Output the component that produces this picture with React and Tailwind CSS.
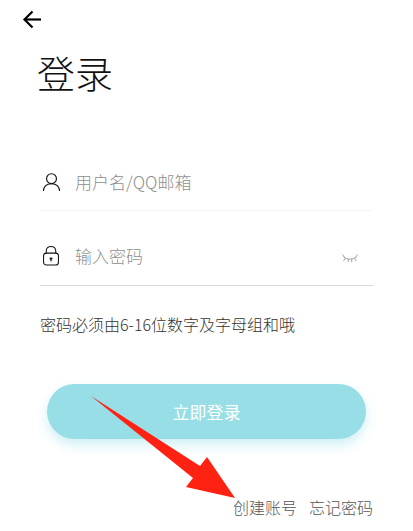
const cjk = 'font-["Noto_Sans_CJK_SC","Noto_Sans",sans-serif]';

function BackArrow() {
  return (
    <svg width="20" height="20" viewBox="0 0 20 20" fill="none" stroke="#000" strokeWidth="2.2">
      <path d="M19 9.5H3" />
      <path d="M10.5 1.5L2.5 9.5L10.5 17.5" />
    </svg>
  );
}

function UserIcon() {
  return (
    <svg width="19" height="20" viewBox="0 0 20 20" fill="none" stroke="#111" strokeWidth="1.2">
      <circle cx="10" cy="6.5" r="5.2" />
      <path d="M1.5 19.5C1.8 14.6 5 11.8 10 11.8C15 11.8 18.2 14.6 18.5 19.5" />
    </svg>
  );
}

function LockIcon() {
  return (
    <svg width="18" height="21" viewBox="0 0 18 22" fill="none" stroke="#111" strokeWidth="1.1">
      <path d="M4 9V6.5C4 3.5 6 1.5 9 1.5C12 1.5 14 3.5 14 6.5V9" />
      <rect x="1.2" y="8.5" width="15.6" height="12.5" rx="3" />
      <path d="M9 13V17" strokeWidth="1.4" />
      <path d="M7.5 14.2H10.5" strokeWidth="1.4" />
    </svg>
  );
}

function ClosedEye() {
  return (
    <svg width="16" height="9" viewBox="0 0 18 10" fill="none" stroke="#999" strokeWidth="1">
      <path d="M1.5 3C5.5 6.6 12.5 6.6 16.5 3" />
      <path d="M0.5 0.5L3 3.8" />
      <path d="M1.5 8L4 4.5" />
      <path d="M7 5.5L7.2 9" />
      <path d="M11 5.5L10.8 9" />
      <path d="M14 4.5L16 8" />
      <path d="M15 3.8L17.5 0.5" />
    </svg>
  );
}

function RedArrow() {
  return (
    <svg className="absolute left-0 top-0" width="413" height="531" viewBox="0 0 413 531">
      <path d="M91 396L200 466L207 457L235 498L186 487L193 478Z" fill="#ff2112" />
    </svg>
  );
}

export default function App() {
  return (
    <div className={`relative w-[413px] h-[531px] bg-white overflow-hidden font-light ${cjk}`}>
      <div className="pl-[22px] pt-[10px] h-[53px]">
        <BackArrow />
      </div>

      <h1 className="pl-[37px] text-[38px] leading-[37px] text-[#111] font-light">登录</h1>

      <div className="mx-[40px] mt-[61px] h-[60px] flex items-center border-b border-[#f5f5f5]">
        <div className="w-[35px] pl-[2px] pt-[2px]">
          <UserIcon />
        </div>
        <span className="pt-[2px] text-[17px] text-[#8e8e8e]">用户名/QQ邮箱</span>
      </div>

      <div className="mx-[40px] mt-[14px] h-[61px] flex items-center border-b border-[#d9d9d9]">
        <div className="w-[35px] pl-[2px]">
          <LockIcon />
        </div>
        <span className="pt-[2px] text-[17px] text-[#8e8e8e]">输入密码</span>
        <div className="ml-auto mr-[15px] pt-[6px]">
          <ClosedEye />
        </div>
      </div>

      <p className="pl-[40px] mt-[27px] text-[16px] leading-[22px] text-[#333]">密码必须由6-16位数字及字母组和哦</p>

      <div className="mx-[47px] mt-[49px] h-[55px] rounded-[28px] bg-[#97dee6] shadow-[0_6px_12px_rgba(151,222,230,0.45)] flex items-center justify-center">
        <span className="text-[17px] font-normal text-white">立即登录</span>
      </div>

      <div className="mt-[58px] pr-[40px] flex justify-end gap-[12px] text-[16px] leading-[20px] text-[#555]">
        <span>创建账号</span>
        <span>忘记密码</span>
      </div>

      <RedArrow />
    </div>
  );
}
